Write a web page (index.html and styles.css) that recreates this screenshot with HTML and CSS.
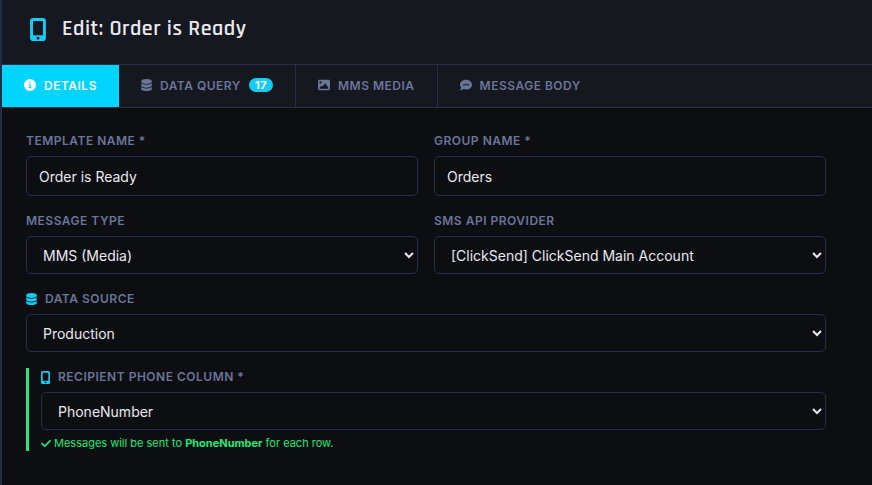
FILE: index.html
```
<!DOCTYPE html>
<html lang="en">

<head>
    <meta charset="UTF-8" />
    <meta name="viewport" content="width=device-width, initial-scale=1.0" />
    <title>Edit: Order is Ready</title>
    <link rel="stylesheet" href="styles.css">
</head>

<body>
    <!-- Icon shapes -->
    <svg class="sprite" aria-hidden="true">
        <symbol id="i-mobile" viewBox="16 0 352 512">
            <path d="M16 64C16 28.7 44.7 0 80 0L304 0c35.3 0 64 28.7 64 64l0 384c0 35.3-28.7 64-64 64L80 512c-35.3 0-64-28.7-64-64L16 64zM224 448a32 32 0 1 0 -64 0 32 32 0 1 0 64 0zM304 64L80 64l0 320 224 0 0-320z" />
        </symbol>
        <symbol id="i-info" viewBox="0 0 512 512">
            <path d="M256 512A256 256 0 1 0 256 0a256 256 0 1 0 0 512zM216 336l24 0 0-64-24 0c-13.3 0-24-10.7-24-24s10.7-24 24-24l48 0c13.3 0 24 10.7 24 24l0 88 8 0c13.3 0 24 10.7 24 24s-10.7 24-24 24l-80 0c-13.3 0-24-10.7-24-24s10.7-24 24-24zm40-208a32 32 0 1 1 0 64 32 32 0 1 1 0-64z" />
        </symbol>
        <symbol id="i-database" viewBox="0 0 448 512">
            <path d="M448 80l0 48c0 44.2-100.3 80-224 80S0 172.2 0 128L0 80C0 35.8 100.3 0 224 0S448 35.8 448 80zM393.2 214.7c20.8-7.4 39.9-16.9 54.8-28.6L448 288c0 44.2-100.3 80-224 80S0 332.2 0 288L0 186.1c14.9 11.8 34 21.2 54.8 28.6C99.7 230.7 159.5 240 224 240s124.3-9.3 169.2-25.3zM0 346.1c14.9 11.8 34 21.2 54.8 28.6C99.7 390.7 159.5 400 224 400s124.3-9.3 169.2-25.3c20.8-7.4 39.9-16.9 54.8-28.6l0 85.9c0 44.2-100.3 80-224 80S0 476.2 0 432l0-85.9z" />
        </symbol>
        <symbol id="i-image" viewBox="0 0 512 512">
            <path d="M0 96C0 60.7 28.7 32 64 32l384 0c35.3 0 64 28.7 64 64l0 320c0 35.3-28.7 64-64 64L64 480c-35.3 0-64-28.7-64-64L0 96zM323.8 202.5c-4.5-6.6-11.9-10.5-19.8-10.5s-15.4 3.9-19.8 10.5l-87 127.6L170.7 297c-4.6-5.7-11.5-9-18.7-9s-14.2 3.3-18.7 9l-64 80c-5.8 7.2-6.9 17.1-2.9 25.4s12.4 13.6 21.6 13.6l96 0 32 0 208 0c8.9 0 17.1-4.9 21.2-12.8s3.6-17.4-1.4-24.7l-120-176zM112 192a48 48 0 1 0 0-96 48 48 0 1 0 0 96z" />
        </symbol>
        <symbol id="i-comment" viewBox="0 0 512 512">
            <path d="M256 448c141.4 0 256-93.1 256-208S397.4 32 256 32S0 125.1 0 240c0 45.1 17.7 86.8 47.7 120.9c-1.9 24.5-11.4 46.3-21.4 62.9c-5.5 9.2-11.1 16.6-15.2 21.6c-2.1 2.5-3.7 4.4-4.9 5.7l-1.6 1.7c-4.6 4.6-5.9 11.4-3.4 17.4c2.5 6 8.3 9.9 14.8 9.9c28.7 0 57.6-8.9 81.6-19.3c22.9-10 42.4-21.9 54.3-30.6c31.8 11.5 67 17.9 104.1 17.9z" />
            <path class="comment-wave" d="M104 270L150 270 166 220 200 270 218 205 256 260 294 205 312 270 346 220 362 260 408 215" />
        </symbol>
        <symbol id="i-check" viewBox="0 0 448 512">
            <path d="M438.6 105.4c12.5 12.5 12.5 32.8 0 45.3l-256 256c-12.5 12.5-32.8 12.5-45.3 0l-128-128c-12.5-12.5-12.5-32.8 0-45.3s32.8-12.5 45.3 0L160 338.7 393.4 105.4c12.5-12.5 32.8-12.5 45.3 0z" />
        </symbol>
    </svg>

    <main class="editor">
        <header class="editor-header">
            <svg class="header-icon"><use href="#i-mobile" /></svg>
            <h1>Edit: Order is Ready</h1>
        </header>

        <nav class="tabs">
            <button type="button" class="tab active"><svg class="icon"><use href="#i-info" /></svg>Details</button>
            <button type="button" class="tab"><svg class="icon narrow"><use href="#i-database" /></svg>Data Query <span class="badge">17</span></button>
            <button type="button" class="tab"><svg class="icon"><use href="#i-image" /></svg>MMS Media</button>
            <button type="button" class="tab"><svg class="icon"><use href="#i-comment" /></svg>Message Body</button>
        </nav>

        <form class="panel">
            <div class="form-row">
                <div class="form-group">
                    <label for="templateName">Template Name *</label>
                    <input type="text" id="templateName" value="Order is Ready" required />
                </div>
                <div class="form-group">
                    <label for="groupName">Group Name *</label>
                    <input type="text" id="groupName" value="Orders" required />
                </div>
            </div>
            <div class="form-row">
                <div class="form-group">
                    <label for="messageType">Message Type</label>
                    <select id="messageType">
                        <option>MMS (Media)</option>
                    </select>
                </div>
                <div class="form-group">
                    <label for="provider">SMS API Provider</label>
                    <select id="provider">
                        <option>[ClickSend] ClickSend Main Account</option>
                    </select>
                </div>
            </div>
            <div class="form-group">
                <label for="dataSource"><svg class="icon narrow accent"><use href="#i-database" /></svg>Data Source</label>
                <select id="dataSource">
                    <option>Production</option>
                </select>
            </div>
            <div class="form-group recipient">
                <label for="phoneColumn"><svg class="icon slim accent"><use href="#i-mobile" /></svg>Recipient Phone Column *</label>
                <select id="phoneColumn">
                    <option>PhoneNumber</option>
                </select>
                <p class="hint"><svg class="hint-icon"><use href="#i-check" /></svg><span>Messages will be sent to <strong>PhoneNumber</strong> for each row.</span></p>
            </div>
        </form>
    </main>
</body>

</html>
```
FILE: styles.css
```
* {
    box-sizing: border-box;
    margin: 0;
    padding: 0;
}

body {
    font-family: Inter, sans-serif;
    font-size: 14px;
    background: #0d0e12;
    color: #e8eaf0;
}

.sprite {
    display: none;
}

svg {
    fill: currentColor;
    flex-shrink: 0;
}

.comment-wave {
    fill: none;
    stroke: #161820;
    stroke-width: 30;
}

.editor {
    min-height: 100vh;
    border-left: 2px solid #252b48;
}

.editor-header {
    display: flex;
    align-items: center;
    gap: 16px;
    padding: 15px 28px 21px;
    background: #161820;
    border-bottom: 1px solid #2a2d48;
}

.header-icon {
    width: 16px;
    height: 23px;
    color: #14cdf5;
}

.editor-header h1 {
    font-family: Rajdhani, Roboto, sans-serif;
    font-size: 22px;
    font-weight: 600;
    line-height: 28px;
    letter-spacing: 0.5px;
}

.tabs {
    display: flex;
    background: #161820;
    border-bottom: 1px solid #2a2d48;
}

.tab {
    display: flex;
    align-items: center;
    gap: 8px;
    height: 42px;
    padding: 0 22px 2px;
    border: none;
    border-right: 1px solid #2a2d48;
    background: none;
    color: #6b7499;
    font-family: inherit;
    font-size: 12px;
    font-weight: 600;
    letter-spacing: 0.5px;
    text-transform: uppercase;
    cursor: pointer;
}

.tab.active {
    background: #00d4ff;
    color: #fff;
    border-right: none;
}

.tab:last-child {
    border-right: none;
}

.icon {
    width: 12px;
    height: 12px;
}

.icon.narrow {
    width: 11px;
}

.icon.slim {
    width: 9px;
    height: 13px;
}

.icon.accent {
    color: #14cdf5;
}

.badge {
    padding: 0 6px;
    border-radius: 10px;
    background: #14cdf5;
    color: #fff;
    font-size: 11px;
    font-weight: 700;
    line-height: 14px;
}

.panel {
    display: flex;
    flex-direction: column;
    gap: 16px;
    padding: 24px 46px 24px 24px;
}

.form-row {
    display: grid;
    grid-template-columns: 1fr 1fr;
    gap: 16px;
}

.form-group label {
    display: flex;
    align-items: center;
    gap: 8px;
    margin-bottom: 6px;
    color: #6b7499;
    font-size: 12px;
    font-weight: 600;
    line-height: 18px;
    letter-spacing: 0.5px;
    text-transform: uppercase;
}

.form-group input,
.form-group select {
    display: block;
    width: 100%;
    height: 38px;
    padding: 0 12px;
    border: 1px solid #2a2d48;
    border-radius: 5px;
    background: #0d0e12;
    color: #e8eaf0;
    font-family: inherit;
    font-size: 14px;
}

.form-group input {
    height: 40px;
}

.form-group input:focus,
.form-group select:focus {
    outline: none;
    border-color: #00d4ff;
}

.recipient {
    padding-left: 12px;
    border-left: 3px solid #22e58a;
}

.hint {
    display: flex;
    align-items: center;
    gap: 3px;
    padding-top: 5px;
    color: #1fe874;
    font-size: 11px;
    line-height: 16px;
}

.hint-icon {
    width: 10px;
    height: 11px;
    stroke: currentColor;
    stroke-width: 20;
}
```
